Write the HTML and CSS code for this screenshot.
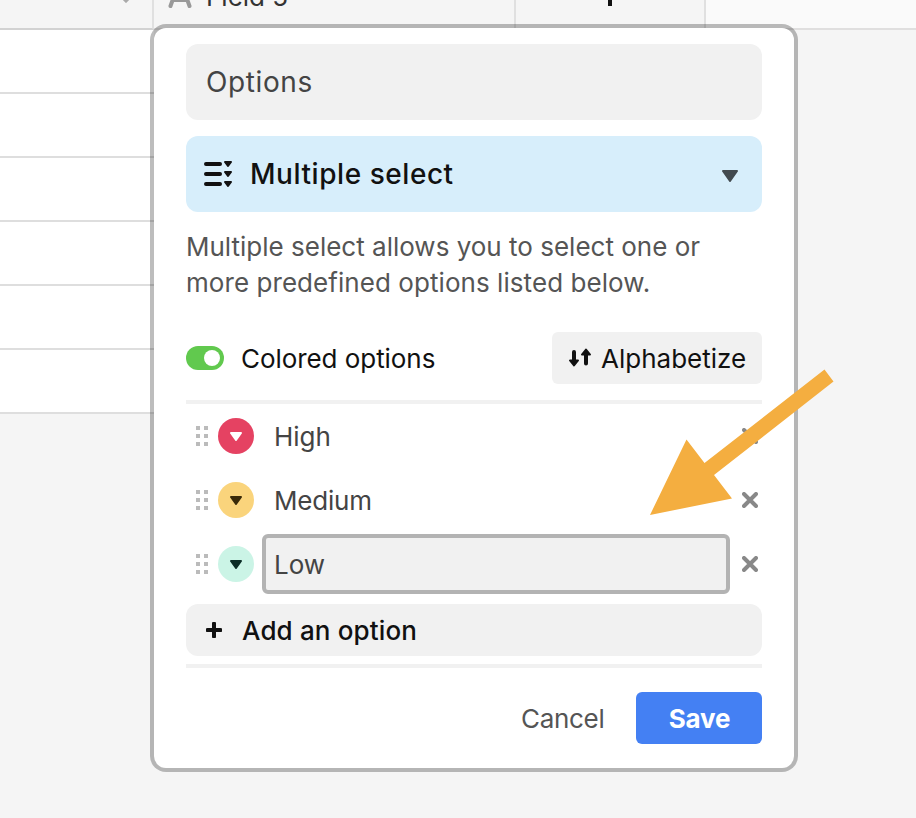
FILE: index.html
```html
<!DOCTYPE html>
<html lang="en">
<head>
<meta charset="utf-8">
<title>Field options</title>
<link rel="stylesheet" href="styles.css">
</head>
<body>
<div class="app">
  <div class="grid">
    <div class="head">
      <div class="cell first"><svg width="16" height="12" viewBox="0 0 16 12"><path d="M2 4l6 6 6-6" fill="none" stroke="#aaa" stroke-width="3"/></svg></div>
      <div class="cell field"><svg width="24" height="26" viewBox="0 0 24 26"><path d="M2.500 24L10 3h4l7.500 21M5 18h14" fill="none" stroke="#999" stroke-width="4" stroke-linecap="round" stroke-linejoin="round"/></svg><span class="field-name">Field 5</span></div>
      <div class="cell add"><svg width="16" height="16" viewBox="0 0 16 16"><path d="M8 0v16M0 8h16" stroke="#111" stroke-width="4"/></svg></div>
      <div class="rest"></div>
    </div>
    <div class="rows"><div class="row"></div><div class="row"></div><div class="row"></div><div class="row"></div><div class="row"></div><div class="row"></div></div>
  </div>

  <div class="dialog">
    <div class="name"><span class="t-name">Options</span></div>
    <div class="type">
      <svg class="type-icon" width="30" height="28" viewBox="0 0 30 28"><path d="M2 4h14M2 14h14M2 24h14" stroke="#111" stroke-width="4" stroke-linecap="round"/><path d="M21 2h6l-3 4zM21 12h6l-3 4zM21 22h6l-3 4z" fill="#111" stroke="#111" stroke-width="2" stroke-linejoin="round"/></svg>
      <span class="t-type">Multiple select</span>
      <svg width="16" height="12" viewBox="0 0 16 12"><path d="M1 1h14L8 11z" fill="#424a4f" stroke="#424a4f" stroke-width="2" stroke-linejoin="round"/></svg>
    </div>
    <p class="desc"><span class="t-d1">Multiple select allows you to select one or</span><br><span class="t-d2">more predefined options listed below.</span></p>
    <div class="tools">
      <span class="toggle"><span class="knob"></span></span>
      <span class="t-colored">Colored options</span>
      <button class="alpha"><svg width="24" height="20" viewBox="0 0 24 20"><path d="M6 4v10M18 5v10.500" stroke="#111" stroke-width="4" stroke-linecap="round"/><path d="M2 12.500h8l-4 5zM14 6.500h8l-4-5z" fill="#111" stroke="#111" stroke-width="2" stroke-linejoin="round"/></svg><span class="t-alpha">Alphabetize</span></button>
    </div>
    <div class="options">
      <div class="option">
        <svg class="grip" width="12" height="20" viewBox="0 0 12 20"><path d="M0 2h12M0 10h12M0 18h12" stroke="#bbb" stroke-width="4" stroke-dasharray="4 4"/></svg>
        <span class="dot red"><svg width="12" height="10" viewBox="0 0 12 10"><path d="M1 2h10L6 9z"/></svg></span>
        <span class="value"><span class="t-high">High</span></span>
        <svg class="remove" width="16" height="16" viewBox="0 0 16 16"><path d="M2 2l12 12M14 2L2 14"/></svg>
      </div>
      <div class="option">
        <svg class="grip" width="12" height="20" viewBox="0 0 12 20"><path d="M0 2h12M0 10h12M0 18h12" stroke="#bbb" stroke-width="4" stroke-dasharray="4 4"/></svg>
        <span class="dot yellow"><svg width="12" height="10" viewBox="0 0 12 10"><path d="M1 2h10L6 9z"/></svg></span>
        <span class="value"><span class="t-medium">Medium</span></span>
        <svg class="remove" width="16" height="16" viewBox="0 0 16 16"><path d="M2 2l12 12M14 2L2 14"/></svg>
      </div>
      <div class="option">
        <svg class="grip" width="12" height="20" viewBox="0 0 12 20"><path d="M0 2h12M0 10h12M0 18h12" stroke="#bbb" stroke-width="4" stroke-dasharray="4 4"/></svg>
        <span class="dot teal"><svg width="12" height="10" viewBox="0 0 12 10"><path d="M1 2h10L6 9z"/></svg></span>
        <span class="value focused"><span class="t-low">Low</span></span>
        <svg class="remove" width="16" height="16" viewBox="0 0 16 16"><path d="M2 2l12 12M14 2L2 14"/></svg>
      </div>
    </div>
    <div class="new-option"><svg width="16" height="16" viewBox="0 0 16 16"><path d="M8 1.500v13M1.500 8h13" stroke="#111" stroke-width="4" stroke-linecap="round"/></svg><span class="t-add">Add an option</span></div>
    <div class="footer">
      <button class="cancel"><span class="t-cancel">Cancel</span></button>
      <button class="save"><span class="t-save">Save</span></button>
    </div>
  </div>

  <svg class="pointer" width="184" height="147" viewBox="650 369 184 147"><path d="M824.500 369.500l9 12L714 475l18 23.500-82 16.500 36.500-75.500 18 23.500z" fill="#f4ae40"/></svg>
</div>
</body>
</html>
```
FILE: styles.css
```css
* { box-sizing: border-box; }
body { margin: 0; font-family: Inter, "Liberation Sans", sans-serif; font-size: 26px; color: #111; }
svg { display: block; flex: none; }
button { font: inherit; color: inherit; border: 0; padding: 0; }
span { white-space: nowrap; }

.app { position: relative; width: 916px; height: 818px; overflow: hidden; background: #f5f5f5; }
.head { display: flex; height: 30px; border-bottom: 2px solid #e0dfdf; }
.cell { flex: none; display: flex; border-right: 2px solid #e0e0e0; background: #f5f5f5; }
.first { width: 154px; padding-left: 118px; margin-bottom: -2px; border-bottom: 2px solid #d2d2d2; }
.first svg { margin-top: -9px; }
.field { width: 362px; padding-left: 14px; }
.field svg { margin-top: -18px; }
.field-name { margin: -19px 0 0 14px; line-height: 32px; color: #333; }
.add { width: 190px; padding-left: 86px; }
.add svg { margin-top: -10px; }
.rest { flex: 1; background: #fafafa; }
.rows { width: 154px; background: #fff; }
.row { height: 64px; border-bottom: 2px solid #dedede; }

.dialog { position: absolute; left: 150px; top: 24px; width: 648px; height: 748px; padding: 16px 32px; border: 4px solid rgba(0, 0, 0, .26); border-radius: 16px; background: #fff; background-clip: padding-box; }
.name { display: flex; align-items: center; height: 76px; padding-left: 20px; border-radius: 12px; background: #f1f1f1; font-size: 28px; color: #444; }
.t-name { letter-spacing: .6px; }
.type { display: flex; align-items: center; height: 76px; margin-top: 16px; padding: 0 24px 0 18px; border-radius: 12px; background: #d7eefb; font-size: 28px; font-weight: 500; }
.type-icon { margin-right: 16px; }
.t-type { flex: 1; letter-spacing: .55px; }
.type svg:last-child { margin-top: 4px; }
.desc { margin: 17px 0 0; height: 72px; line-height: 36px; color: #555; }
.t-d2 { letter-spacing: .06px; }
.tools { display: flex; align-items: center; height: 52px; margin-top: 31px; }
.toggle { display: flex; align-items: center; justify-content: flex-end; width: 38px; height: 24px; padding-right: 4px; margin-right: 17px; border-radius: 12px; background: #61c94e; }
.knob { width: 16px; height: 16px; border-radius: 50%; background: #fff; }
.t-colored { letter-spacing: -.06px; }
.alpha { display: flex; align-items: center; width: 210px; height: 52px; margin-left: auto; padding-left: 16px; border-radius: 6px; background: #f1f1f1; }
.alpha svg { margin-right: 9px; }
.options { margin-top: 16px; border-top: 4px solid #f1f1f1; }
.option { display: flex; align-items: center; height: 64px; padding-left: 10px; color: #444; }
.dot { display: flex; align-items: center; justify-content: center; width: 36px; height: 36px; margin: 0 8px 0 10px; border-radius: 50%; }
.dot svg { fill: currentColor; stroke: currentColor; stroke-width: 2; stroke-linejoin: round; }
.red { background: #e54262; color: #fff; }
.yellow { background: #fad47c; color: #3a2a08; }
.teal { background: #cbf4e6; color: #0b2d26; }
.value { display: flex; align-items: center; width: 468px; height: 60px; padding-left: 8px; border: 4px solid transparent; border-radius: 6px; }
.t-medium { letter-spacing: -.2px; }
.focused { border-color: #b3b3b3; background: #f1f1f1; }
.remove { margin-left: 12px; stroke: #888; stroke-width: 4; stroke-linecap: round; }
.new-option { display: flex; align-items: center; height: 52px; margin-top: 8px; padding-left: 20px; border-radius: 12px; background: #f1f1f1; font-weight: 500; }
.new-option svg { margin-right: 20px; }
.t-add { letter-spacing: .15px; }
.footer { display: flex; justify-content: flex-end; margin-top: 8px; padding-top: 24px; border-top: 4px solid #f1f1f1; }
.cancel { width: 84px; margin-right: 31px; background: none; color: #555; text-align: left; letter-spacing: -.3px; }
.save { width: 126px; height: 52px; border-radius: 6px; background: #4480f3; color: #fff; font-weight: 700; letter-spacing: -.2px; }
.t-save { margin-left: 1px; }
.pointer { position: absolute; left: 650px; top: 369px; }
```
